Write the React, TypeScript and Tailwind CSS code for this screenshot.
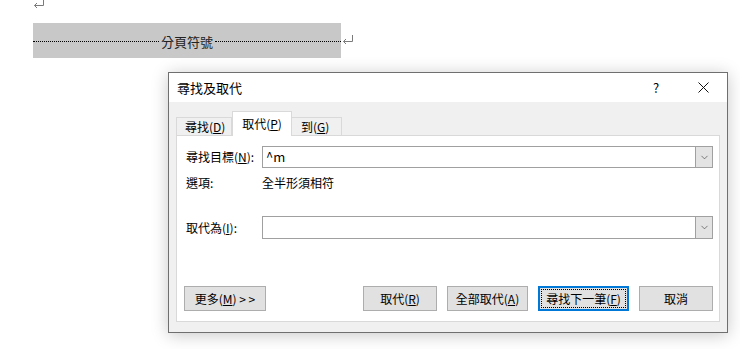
import { ChevronDown } from 'lucide-react';

const font = { fontFamily: '"Noto Sans CJK TC", "Noto Sans", sans-serif' };

function ReturnMark() {
  return (
    <svg width="12" height="9" viewBox="0 0 12 9" className="text-[#7a7a7a]">
      <path d="M10.5 0 V6.5 H1.5 M4 4 L1.5 6.5 L4 9" fill="none" stroke="currentColor" strokeWidth="1" />
    </svg>
  );
}

function Combo({ value, h }: { value?: string; h: string }) {
  return (
    <div className={`flex-1 flex border border-[#a0a0a0] bg-white ${h}`}>
      <div className="flex-1 flex items-center pl-[3px] text-[13px] text-black">{value}</div>
      <div className="w-[17px] flex items-center justify-center bg-[#e3e3e3] border-l border-[#a0a0a0]">
        <ChevronDown size={11} strokeWidth={1.3} className="text-[#333]" />
      </div>
    </div>
  );
}

function Btn({ children, w, focus }: { children: React.ReactNode; w: string; focus?: boolean }) {
  return (
    <div
      className={`${w} h-[25px] flex items-center justify-center bg-[#e1e1e1] text-[12px] text-black ${
        focus ? 'border-2 border-[#0078d7] p-[1px]' : 'border border-[#adadad]'
      }`}
    >
      {focus ? (
        <div className="w-full h-full flex items-center justify-center border border-dotted border-black">{children}</div>
      ) : (
        children
      )}
    </div>
  );
}

export default function App() {
  return (
    <div className="relative w-[740px] h-[349px] bg-white overflow-hidden" style={font}>
      <div className="pl-[33px]">
        <div className="-mt-[1px] h-[9px]">
          <ReturnMark />
        </div>
        <div className="mt-[15px] flex items-start">
          <div className="w-[308px] h-[35px] bg-[#c8c8c8] flex items-center pt-[1px]">
            <div className="flex-1 border-t border-dotted border-black" />
            <span className="px-[2px] text-[13px] leading-none text-[#222]">分頁符號</span>
            <div className="flex-1 border-t border-dotted border-black" />
          </div>
          <div className="ml-[1px] mt-[12px]">
            <ReturnMark />
          </div>
        </div>
      </div>

      {/* dialog window */}
      <div className="absolute left-[168px] top-[72px] w-[560px] h-[261px] border border-[#6f6f6f] bg-[#f0f0f0] shadow-[0_2px_16px_rgba(0,0,0,0.22)] flex flex-col">
        <div className="h-[29px] bg-white flex items-center pl-[8px] text-[13px] text-black">
          <span className="flex-1">尋找及取代</span>
          <span className="w-[10px] text-[13px] mr-[35px]">?</span>
          <svg width="11" height="11" viewBox="0 0 11 11" className="mr-[18px]">
            <path d="M0.5 0.5 L10.5 10.5 M10.5 0.5 L0.5 10.5" stroke="#111" strokeWidth="1" />
          </svg>
        </div>

        <div className="flex-1 px-[7px] pt-[9px] pb-[10px] flex flex-col">
          <div className="flex items-end h-[24px] text-[12px] text-black">
            <div className="w-[56px] h-[18px] border border-b-0 border-[#d9d9d9] bg-[#f0f0f0] pl-[8px] flex items-center">
              尋找(<u>D</u>)
            </div>
            <div className="w-[60px] h-[25px] -mb-[1px] border border-b-0 border-[#d9d9d9] bg-white flex items-center justify-center relative z-10">
              取代(<u>P</u>)
            </div>
            <div className="w-[50px] h-[18px] border border-b-0 border-l-0 border-[#d9d9d9] bg-[#f0f0f0] pl-[9px] flex items-center">
              到(<u>G</u>)
            </div>
          </div>

          <div className="flex-1 border border-[#d9d9d9] bg-white flex flex-col px-[6px] text-[12px] text-black">
            <div className="mt-[10px] flex items-center">
              <div className="w-[79px] pl-[3px]">
                尋找目標(<u>N</u>):
              </div>
              <Combo value="^m" h="h-[22px]" />
            </div>
            <div className="mt-[7px] h-[16px] flex items-center">
              <div className="w-[79px] pl-[3px]">選項:</div>
              <div>全半形須相符</div>
            </div>
            <div className="mt-[25px] flex items-center">
              <div className="w-[79px] pl-[3px]">
                取代為(<u>I</u>):
              </div>
              <Combo h="h-[23px]" />
            </div>
            <div className="mt-[47px] flex items-center pl-[1px]">
              <Btn w="w-[82px]">
                <span>
                  更多(<u>M</u>) &gt; &gt;
                </span>
              </Btn>
              <div className="flex-1" />
              <div className="flex gap-[10px]">
                <Btn w="w-[74px]">
                  <span>
                    取代(<u>R</u>)
                  </span>
                </Btn>
                <Btn w="w-[81px]">
                  <span>
                    全部取代(<u>A</u>)
                  </span>
                </Btn>
                <Btn w="w-[91px]" focus>
                  <span>
                    尋找下一筆(<u>F</u>)
                  </span>
                </Btn>
                <Btn w="w-[74px]">
                  <span>取消</span>
                </Btn>
              </div>
            </div>
          </div>
        </div>
      </div>
    </div>
  );
}
